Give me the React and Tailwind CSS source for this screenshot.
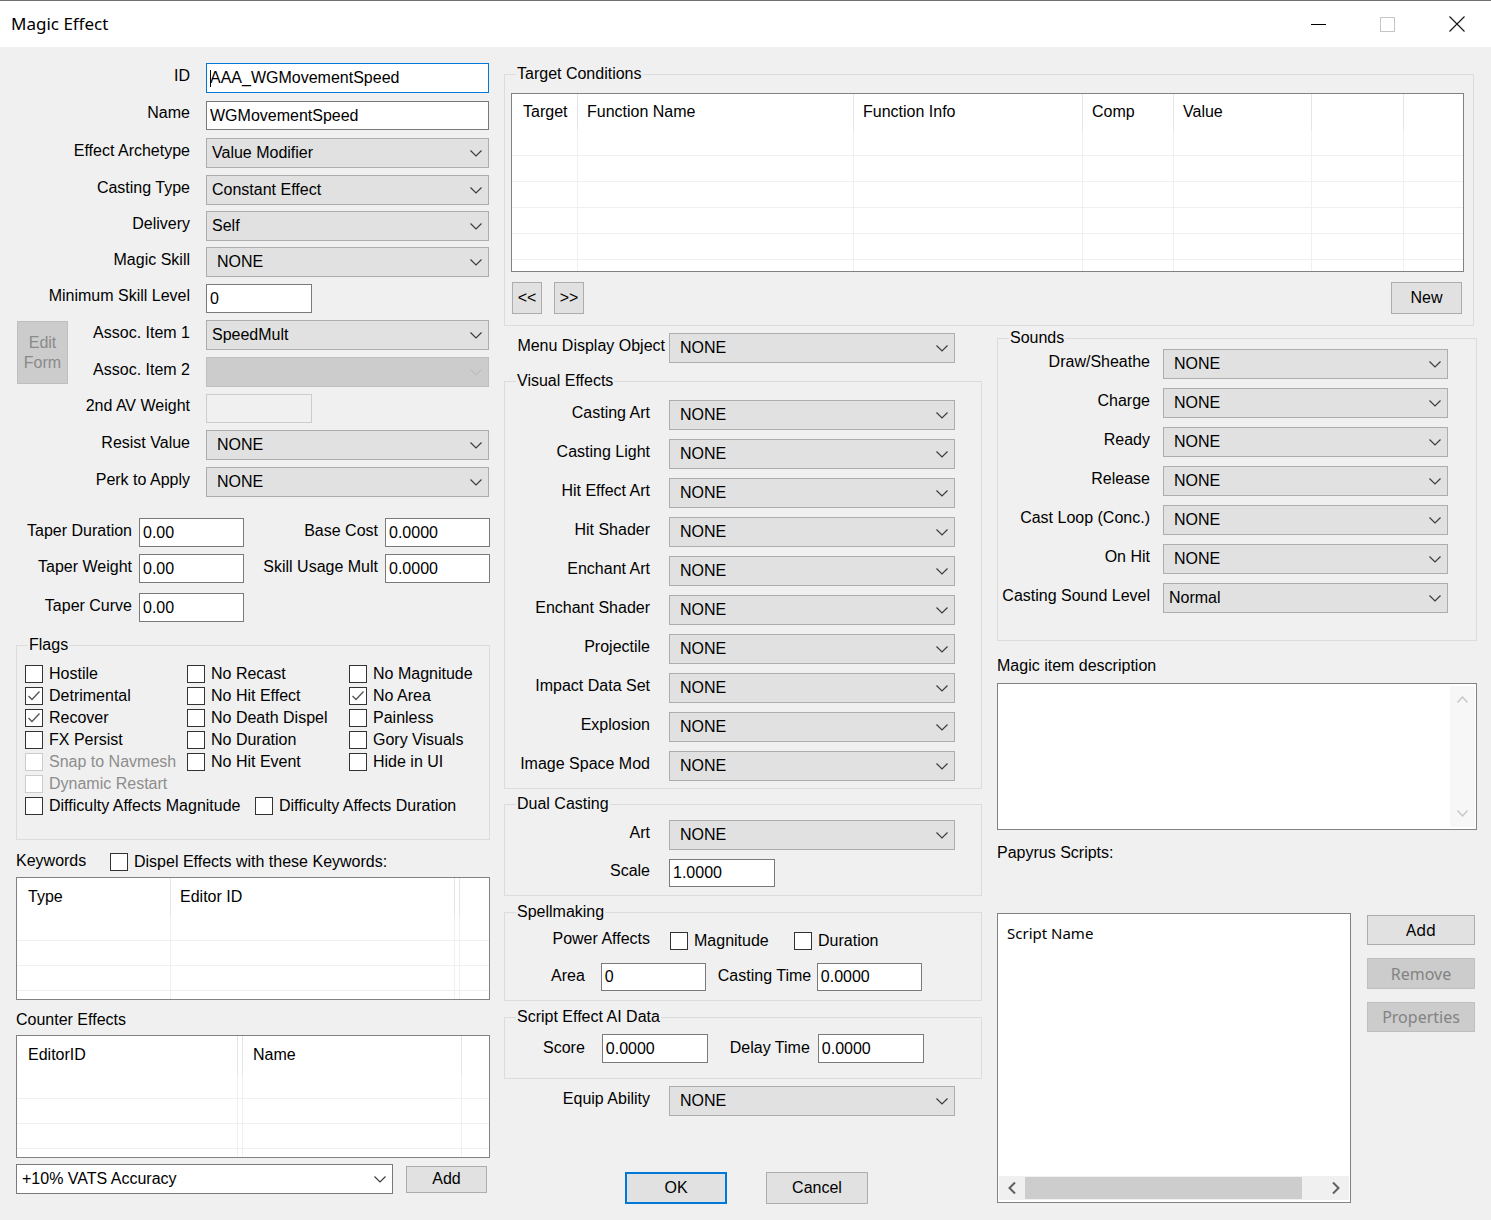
import React from "react";

const Chevron = ({ color = "#3c3c3c" }) => (
  <svg width="12" height="7" viewBox="0 0 12 7" className="shrink-0">
    <polyline points="0.5,0.5 6,6 11.5,0.5" fill="none" stroke={color} strokeWidth="1.2" />
  </svg>
);

const Combo = ({ value = "NONE", className = "w-[286px]", disabled = false, white = false }) => (
  <div
    className={`h-[30px] shrink-0 flex items-center justify-between border pr-[6px] ${
      value === "NONE" ? "pl-[10px]" : "pl-[5px]"
    } ${
      disabled
        ? "bg-[#cccccc] border-[#bfbfbf]"
        : white
        ? "bg-white border-[#7a7a7a]"
        : "bg-[#e1e1e1] border-[#adadad]"
    } ${className}`}
  >
    <span className="whitespace-nowrap">{value}</span>
    <Chevron color={disabled ? "#bdbdbd" : "#3c3c3c"} />
  </div>
);

const Field = ({ value = "", className = "w-[106px] h-[29px]", focused = false, disabled = false }) => (
  <div
    className={`shrink-0 flex items-center pl-[3px] border ${
      focused
        ? "border-[#0078d7] bg-white"
        : disabled
        ? "border-[#cccccc] bg-[#f0f0f0]"
        : "border-[#7a7a7a] bg-white"
    } ${className}`}
  >
    {focused && <span className="w-px h-[17px] bg-black -mr-px" />}
    <span className="whitespace-nowrap">{value}</span>
  </div>
);

const Check = ({ label, checked = false, disabled = false, className = "" }) => (
  <div className={`flex items-center h-[22px] ${className}`}>
    <div
      className={`w-[18px] h-[18px] shrink-0 border bg-white flex items-center justify-center ${
        disabled ? "border-[#cccccc]" : "border-[#333333]"
      }`}
    >
      {checked && (
        <svg width="14" height="12" viewBox="0 0 14 12">
          <polyline points="1.5,6 5,9.5 12.5,1.5" fill="none" stroke="#555555" strokeWidth="1.3" />
        </svg>
      )}
    </div>
    <span className={`ml-[6px] whitespace-nowrap ${disabled ? "text-[#8d8d8d]" : ""}`}>{label}</span>
  </div>
);

const Btn = ({ children, className = "", disabled = false, primary = false }) => (
  <button
    type="button"
    className={`shrink-0 flex items-center justify-center ${
      primary
        ? "border-2 border-[#0078d7] bg-[#e1e1e1]"
        : disabled
        ? "border border-[#bfbfbf] bg-[#cccccc] text-[#838383]"
        : "border border-[#adadad] bg-[#e1e1e1]"
    } ${className}`}
  >
    {children}
  </button>
);

const Group = ({ title, className = "", children }) => (
  <fieldset className={`border border-[#dcdcdc] ${className}`}>
    <legend className="ml-[11px] px-[1px] leading-[20px]">{title}</legend>
    {children}
  </fieldset>
);

const Row = ({ label, lw, className = "", children }) => (
  <div className={`flex items-center h-[30px] ${className}`}>
    <span className={`${lw} shrink-0 text-right whitespace-nowrap pb-[5px]`}>{label}</span>
    {children}
  </div>
);

const ListView = ({ cols, className = "", headerH = "h-[37px]", rowH = "h-[25px]", rows = 4 }) => (
  <div className={`border border-[#828282] bg-white overflow-hidden ${className}`}>
    <div className={`flex ${headerH}`}>
      {cols.map((c, i) => (
        <div
          key={i}
          className={`flex items-center whitespace-nowrap ${c.w} ${c.pl || ""} ${
            c.last ? "" : "shrink-0 border-r border-[#e5e5e5]"
          }`}
        >
          {c.label}
        </div>
      ))}
    </div>
    {Array.from({ length: rows }).map((_, r) => (
      <div key={r} className={`flex border-b border-[#f0f0f0] ${rowH}`}>
        {cols.map((c, i) => (
          <div key={i} className={`${c.w} ${c.last ? "" : "shrink-0 border-r border-[#f0f0f0]"}`} />
        ))}
      </div>
    ))}
  </div>
);

const TitleBar = () => (
  <div className="h-[47px] bg-white border-t border-[#6f6f6f] flex items-center">
    <span className="ml-[11px] font-['Noto_Sans',sans-serif] text-[17px]">Magic Effect</span>
    <div className="ml-auto flex h-full">
      <div className="w-[69px] flex items-center justify-center">
        <div className="w-[15px] h-px bg-black" />
      </div>
      <div className="w-[69px] flex items-center justify-center">
        <div className="w-[15px] h-[15px] border border-[#c4c4c4]" />
      </div>
      <div className="w-[69px] flex items-center justify-center">
        <svg width="16" height="16" viewBox="0 0 16 16">
          <path d="M0.5 0.5 L15.5 15.5 M15.5 0.5 L0.5 15.5" stroke="#111111" strokeWidth="1.1" />
        </svg>
      </div>
    </div>
  </div>
);

const LeftColumn = () => (
  <div className="w-[474px] shrink-0 pt-[16px]">
    <Row label="ID" lw="w-[174px]">
      <Field focused value="AAA_WGMovementSpeed" className="ml-[16px] w-[283px] h-[30px]" />
    </Row>
    <Row label="Name" lw="w-[174px]" className="mt-[8px] !h-[29px]">
      <Field value="WGMovementSpeed" className="ml-[16px] w-[283px] h-[29px]" />
    </Row>
    <Row label="Effect Archetype" lw="w-[174px]" className="mt-[8px]">
      <Combo value="Value Modifier" className="ml-[16px] w-[283px]" />
    </Row>
    <Row label="Casting Type" lw="w-[174px]" className="mt-[7px]">
      <Combo value="Constant Effect" className="ml-[16px] w-[283px]" />
    </Row>
    <Row label="Delivery" lw="w-[174px]" className="mt-[6px]">
      <Combo value="Self" className="ml-[16px] w-[283px]" />
    </Row>
    <Row label="Magic Skill" lw="w-[174px]" className="mt-[6px]">
      <Combo className="ml-[16px] w-[283px]" />
    </Row>
    <Row label="Minimum Skill Level" lw="w-[174px]" className="mt-[7px] !h-[29px]">
      <Field value="0" className="ml-[16px] w-[106px] h-[29px]" />
    </Row>

    <div className="mt-[7px] flex items-start">
      <Btn disabled className="ml-[1px] mt-[1px] w-[51px] h-[63px] flex-col leading-[20px] !text-[#8a8a8a]">
        <span>Edit</span>
        <span>Form</span>
      </Btn>
      <div>
        <Row label="Assoc. Item 1" lw="w-[122px]">
          <Combo value="SpeedMult" className="ml-[16px] w-[283px]" />
        </Row>
        <Row label="Assoc. Item 2" lw="w-[122px]" className="mt-[7px]">
          <Combo value="" disabled className="ml-[16px] w-[283px]" />
        </Row>
      </div>
    </div>

    <Row label="2nd AV Weight" lw="w-[174px]" className="mt-[7px] !h-[29px]">
      <Field disabled className="ml-[16px] w-[106px] h-[29px]" />
    </Row>
    <Row label="Resist Value" lw="w-[174px]" className="mt-[7px]">
      <Combo className="ml-[16px] w-[283px]" />
    </Row>
    <Row label="Perk to Apply" lw="w-[174px]" className="mt-[7px]">
      <Combo className="ml-[16px] w-[283px]" />
    </Row>

    <div className="mt-[21px] flex items-center h-[29px]">
      <span className="w-[116px] text-right pb-[3px] whitespace-nowrap">Taper Duration</span>
      <Field value="0.00" className="ml-[7px] w-[105px] h-[29px]" />
      <span className="flex-1 text-right pb-[3px] whitespace-nowrap">Base Cost</span>
      <Field value="0.0000" className="ml-[7px] w-[105px] h-[29px]" />
    </div>
    <div className="mt-[7px] flex items-center h-[29px]">
      <span className="w-[116px] text-right pb-[3px] whitespace-nowrap">Taper Weight</span>
      <Field value="0.00" className="ml-[7px] w-[105px] h-[29px]" />
      <span className="flex-1 text-right pb-[3px] whitespace-nowrap">Skill Usage Mult</span>
      <Field value="0.0000" className="ml-[7px] w-[105px] h-[29px]" />
    </div>
    <div className="mt-[10px] flex items-center h-[29px]">
      <span className="w-[116px] text-right pb-[3px] whitespace-nowrap">Taper Curve</span>
      <Field value="0.00" className="ml-[7px] w-[105px] h-[29px]" />
    </div>

    <Group title="Flags" className="mt-[13px] w-[474px]">
      <div className="pt-[8px] pl-[8px] pb-[22px]">
        <div className="grid grid-cols-[162px_162px_1fr]">
          <Check label="Hostile" />
          <Check label="No Recast" />
          <Check label="No Magnitude" />
          <Check label="Detrimental" checked />
          <Check label="No Hit Effect" />
          <Check label="No Area" checked />
          <Check label="Recover" checked />
          <Check label="No Death Dispel" />
          <Check label="Painless" />
          <Check label="FX Persist" />
          <Check label="No Duration" />
          <Check label="Gory Visuals" />
          <Check label="Snap to Navmesh" disabled />
          <Check label="No Hit Event" />
          <Check label="Hide in UI" />
          <Check label="Dynamic Restart" disabled />
        </div>
        <div className="flex">
          <Check label="Difficulty Affects Magnitude" className="w-[230px]" />
          <Check label="Difficulty Affects Duration" />
        </div>
      </div>
    </Group>

    <div className="mt-[11px] flex items-center h-[22px]">
      <span className="w-[94px] pb-[2px]">Keywords</span>
      <Check label="Dispel Effects with these Keywords:" />
    </div>
    <ListView
      className="mt-[4px] h-[123px]"
      headerH="h-[38px]"
      cols={[
        { label: "Type", w: "w-[154px]", pl: "pl-[11px]" },
        { label: "Editor ID", w: "w-[284px]", pl: "pl-[9px]" },
        { label: "", w: "w-[5px]" },
        { label: "", w: "flex-1", last: true },
      ]}
    />

    <div className="mt-[10px] h-[20px]">Counter Effects</div>
    <ListView
      className="mt-[5px] h-[123px]"
      headerH="h-[38px]"
      cols={[
        { label: "EditorID", w: "w-[221px]", pl: "pl-[11px]" },
        { label: "", w: "w-[5px]" },
        { label: "Name", w: "w-[219px]", pl: "pl-[10px]" },
        { label: "", w: "flex-1", last: true },
      ]}
    />
    <div className="mt-[6px] flex items-center">
      <Combo white value="+10% VATS Accuracy" className="w-[377px]" />
      <Btn className="ml-[13px] w-[81px] h-[27px]">Add</Btn>
    </div>
  </div>
);

const MidColumn = () => (
  <div className="w-[478px] shrink-0">
    <Row label="Menu Display Object" lw="w-[161px]" className="mt-[7px]">
      <Combo className="ml-[4px] w-[286px]" />
    </Row>

    <Group title="Visual Effects" className="mt-[8px] w-[478px]">
      <div className="pt-[9px] pb-[7px] flex flex-col gap-[9px]">
        {[
          "Casting Art",
          "Casting Light",
          "Hit Effect Art",
          "Hit Shader",
          "Enchant Art",
          "Enchant Shader",
          "Projectile",
          "Impact Data Set",
          "Explosion",
          "Image Space Mod",
        ].map((l) => (
          <Row key={l} label={l} lw="w-[145px]">
            <Combo className="ml-[19px] w-[286px]" />
          </Row>
        ))}
      </div>
    </Group>

    <Group title="Dual Casting" className="mt-[5px] w-[478px]">
      <div className="pt-[6px] pb-[8px]">
        <Row label="Art" lw="w-[145px]">
          <Combo className="ml-[19px] w-[286px]" />
        </Row>
        <Row label="Scale" lw="w-[145px]" className="mt-[9px] !h-[28px]">
          <Field value="1.0000" className="ml-[19px] w-[106px] h-[28px]" />
        </Row>
      </div>
    </Group>

    <Group title="Spellmaking" className="mt-[6px] w-[478px]">
      <div className="pt-[8px] pb-[9px]">
        <div className="flex items-center h-[22px]">
          <span className="w-[145px] text-right pb-[5px]">Power Affects</span>
          <Check label="Magnitude" className="ml-[20px] w-[124px]" />
          <Check label="Duration" />
        </div>
        <div className="mt-[11px] flex items-center h-[28px]">
          <span className="ml-[46px] pb-[2px]">Area</span>
          <Field value="0" className="ml-[16px] w-[105px] h-[28px]" />
          <span className="ml-[12px] w-[90px] whitespace-nowrap pb-[2px]">Casting Time</span>
          <Field value="0.0000" className="ml-[9px] w-[105px] h-[28px]" />
        </div>
      </div>
    </Group>

    <Group title="Script Effect AI Data" className="mt-[6px] w-[478px]">
      <div className="pt-[7px] pb-[15px]">
        <div className="flex items-center h-[29px]">
          <span className="ml-[38px] pb-[2px]">Score</span>
          <Field value="0.0000" className="ml-[17px] w-[106px] h-[29px]" />
          <span className="ml-[22px] w-[78px] whitespace-nowrap pb-[2px]">Delay Time</span>
          <Field value="0.0000" className="ml-[10px] w-[106px] h-[29px]" />
        </div>
      </div>
    </Group>

    <Row label="Equip Ability" lw="w-[146px]" className="mt-[7px]">
      <Combo className="ml-[19px] w-[286px]" />
    </Row>

    <div className="mt-[56px] flex">
      <Btn primary className="ml-[121px] w-[102px] h-[32px]">OK</Btn>
      <Btn className="ml-[39px] w-[102px] h-[32px]">Cancel</Btn>
    </div>
  </div>
);

const ScrollChevron = ({ dir }) => (
  <svg width="10" height="14" viewBox="0 0 10 14">
    <polyline
      points={dir === "left" ? "8,1.5 2.5,7 8,12.5" : "2,1.5 7.5,7 2,12.5"}
      fill="none"
      stroke="#606060"
      strokeWidth="2"
    />
  </svg>
);

const RightColumn = () => (
  <div className="w-[480px] shrink-0">
    <Group title="Sounds" className="mt-[2px] w-[480px]">
      <div className="pt-[1px] pb-[27px] flex flex-col gap-[9px]">
        {[
          ["Draw/Sheathe", "NONE"],
          ["Charge", "NONE"],
          ["Ready", "NONE"],
          ["Release", "NONE"],
          ["Cast Loop (Conc.)", "NONE"],
          ["On Hit", "NONE"],
          ["Casting Sound Level", "Normal"],
        ].map(([l, v]) => (
          <Row key={l} label={l} lw="w-[152px]">
            <Combo value={v} className="ml-[13px] w-[285px]" />
          </Row>
        ))}
      </div>
    </Group>

    <div className="mt-[15px] h-[20px]">Magic item description</div>
    <div className="mt-[7px] h-[147px] w-[480px] border border-[#828282] bg-white flex justify-end">
      <div className="w-[25px] my-[2px] mr-px bg-[#f7f7f7] flex flex-col items-center justify-between py-[10px]">
        <svg width="11" height="7" viewBox="0 0 11 7">
          <polyline points="0.5,6.5 5.5,1 10.5,6.5" fill="none" stroke="#c8c8c8" strokeWidth="1.5" />
        </svg>
        <svg width="11" height="7" viewBox="0 0 11 7">
          <polyline points="0.5,0.5 5.5,6 10.5,0.5" fill="none" stroke="#c8c8c8" strokeWidth="1.5" />
        </svg>
      </div>
    </div>

    <div className="mt-[13px] h-[20px]">Papyrus Scripts:</div>

    <div className="mt-[50px] flex items-start">
      <div className="w-[354px] h-[290px] border border-[#828282] bg-white flex flex-col">
        <div className="pl-[9px] pt-[9px] font-['Noto_Sans',sans-serif] text-[15px]">Script Name</div>
        <div className="flex-1" />
        <div className="mb-[2px] mx-px h-[24px] bg-[#f0f0f0] flex items-center">
          <div className="w-[26px] flex justify-center">
            <ScrollChevron dir="left" />
          </div>
          <div className="w-[277px] h-[22px] bg-[#cdcdcd]" />
          <div className="flex-1" />
          <div className="w-[26px] flex justify-center">
            <ScrollChevron dir="right" />
          </div>
        </div>
      </div>
      <div className="ml-[16px] mt-[2px] flex flex-col font-['Noto_Sans',sans-serif] text-[16px]">
        <Btn className="w-[108px] h-[30px]">Add</Btn>
        <Btn disabled className="mt-[13px] w-[108px] h-[31px]">Remove</Btn>
        <Btn disabled className="mt-[13px] w-[108px] h-[30px]">Properties</Btn>
      </div>
    </div>
  </div>
);

export default function App() {
  return (
    <div className="w-[1491px] h-[1220px] overflow-hidden bg-[#f0f0f0] text-black font-['Liberation_Sans',Arial,sans-serif] text-[16px] leading-[20px]">
      <TitleBar />
      <div className="flex pl-[16px]">
        <LeftColumn />
        <div className="ml-[14px] w-[973px] shrink-0 pt-[17px]">
          <Group title="Target Conditions" className="w-[970px]">
            <div className="pb-[11px]">
              <ListView
                className="mt-[9px] ml-[6px] w-[953px] h-[179px]"
                headerH="h-[36px]"
                rowH="h-[26px]"
                rows={6}
                cols={[
                  { label: "Target", w: "w-[66px]", pl: "pl-[11px]" },
                  { label: "Function Name", w: "w-[276px]", pl: "pl-[9px]" },
                  { label: "Function Info", w: "w-[229px]", pl: "pl-[9px]" },
                  { label: "Comp", w: "w-[91px]", pl: "pl-[9px]" },
                  { label: "Value", w: "w-[138px]", pl: "pl-[9px]" },
                  { label: "", w: "w-[92px]" },
                  { label: "", w: "flex-1", last: true },
                ]}
              />
              <div className="mt-[10px] ml-[7px] flex items-center">
                <Btn className="w-[30px] h-[32px]">&lt;&lt;</Btn>
                <Btn className="ml-[12px] w-[30px] h-[32px]">&gt;&gt;</Btn>
                <Btn className="ml-auto mr-[11px] w-[71px] h-[32px]">New</Btn>
              </div>
            </div>
          </Group>
          <div className="flex gap-[15px] items-start">
            <MidColumn />
            <RightColumn />
          </div>
        </div>
      </div>
    </div>
  );
}
